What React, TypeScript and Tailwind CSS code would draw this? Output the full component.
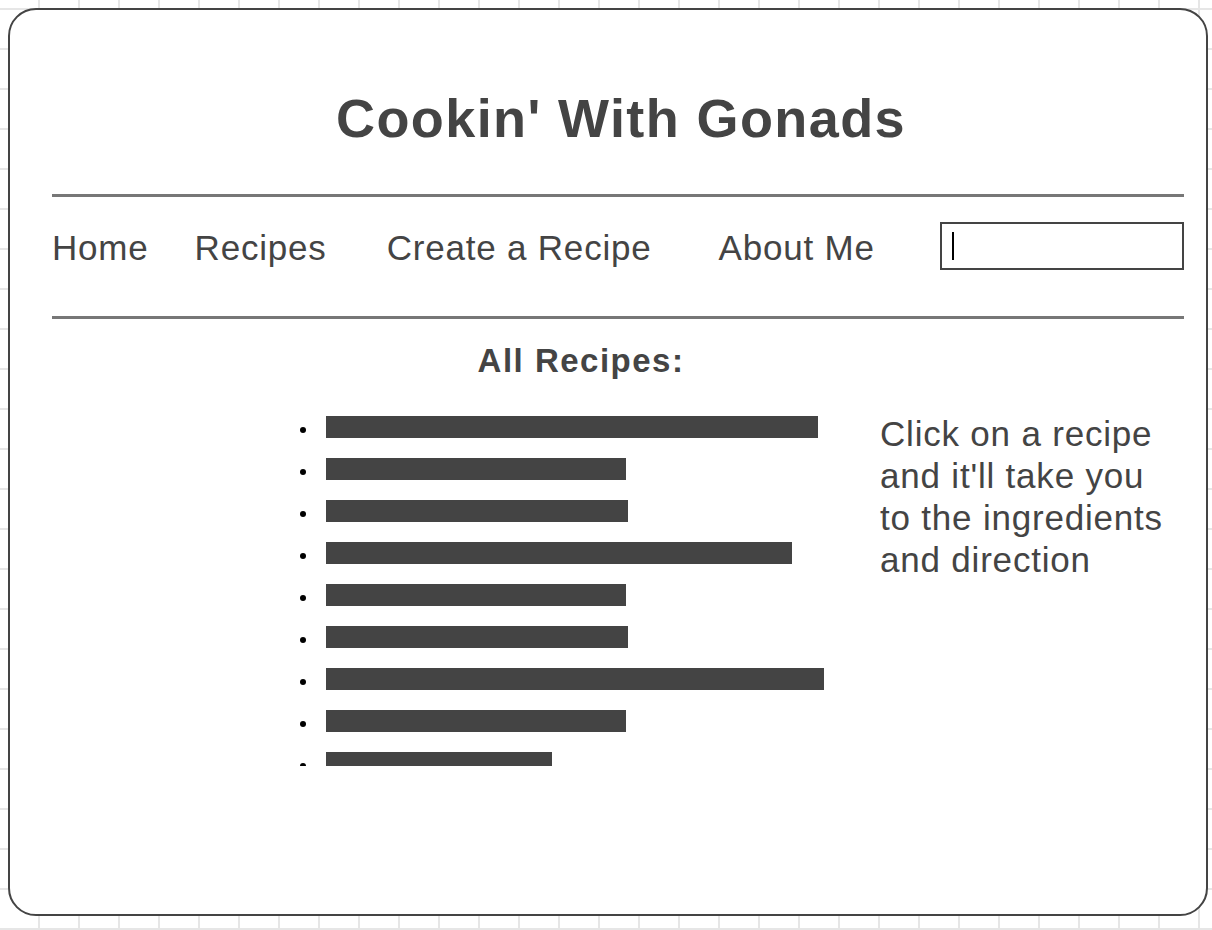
const recipes = [492, 300, 302, 466, 300, 302, 498, 300, 226];

export default function App() {
    return (
        <div className="h-[930px] w-full overflow-hidden bg-white bg-[linear-gradient(to_right,#e6e6e6_2px,transparent_2px),linear-gradient(to_bottom,#e6e6e6_2px,transparent_2px)] bg-[size:40px_40px] bg-[position:38px_8px] pt-[8px] pl-[8px] font-['Liberation_Sans',Arial,sans-serif] text-[#444]">
            <div className="h-[908px] w-[1200px] rounded-[28px] border-2 border-[#444] bg-white pl-[42px] pr-[22px]">
                <h1 className="mt-[76px] pl-[6px] text-center text-[54px] leading-[64px] font-bold tracking-[1.4px]">
                    Cookin' With Gonads
                </h1>

                <div className="mt-[44px] h-[3px] bg-[#777]" />

                <nav className="flex items-center pt-[25px] pb-[46px] text-[35px] leading-[42px] tracking-[0.8px]">
                    <a className="pt-[3px]">Home</a>
                    <a className="ml-[46px] pt-[3px]">Recipes</a>
                    <a className="ml-[60px] pt-[3px]">Create a Recipe</a>
                    <a className="ml-[67px] pt-[3px]">About Me</a>
                    <div className="ml-auto flex h-[48px] w-[244px] items-center border-2 border-[#444] bg-white pl-[10px]">
                        <span className="h-[28px] w-[2px] bg-black" />
                    </div>
                </nav>

                <div className="h-[3px] bg-[#777]" />

                <h2 className="mt-[22px] pr-[74px] text-center text-[33px] leading-[40px] font-bold tracking-[1.5px]">
                    All Recipes:
                </h2>

                <div className="mt-[25px] flex">
                    <ul className="ml-[248px] h-[360px] w-[532px] overflow-hidden">
                        {recipes.map((w, i) => (
                            <li key={i} className="flex h-[42px] items-center">
                                <span className="mt-[5px] h-[6px] w-[6px] rounded-full bg-black" />
                                <span className="ml-[20px] h-[22px] bg-[#444]" style={{ width: w }} />
                            </li>
                        ))}
                    </ul>
                    <p className="mt-[7px] ml-[48px] text-[35px] leading-[42px] tracking-[0.8px]">
                        Click on a recipe
                        <br />
                        and it'll take you
                        <br />
                        to the ingredients
                        <br />
                        and direction
                    </p>
                </div>
            </div>
        </div>
    );
}
